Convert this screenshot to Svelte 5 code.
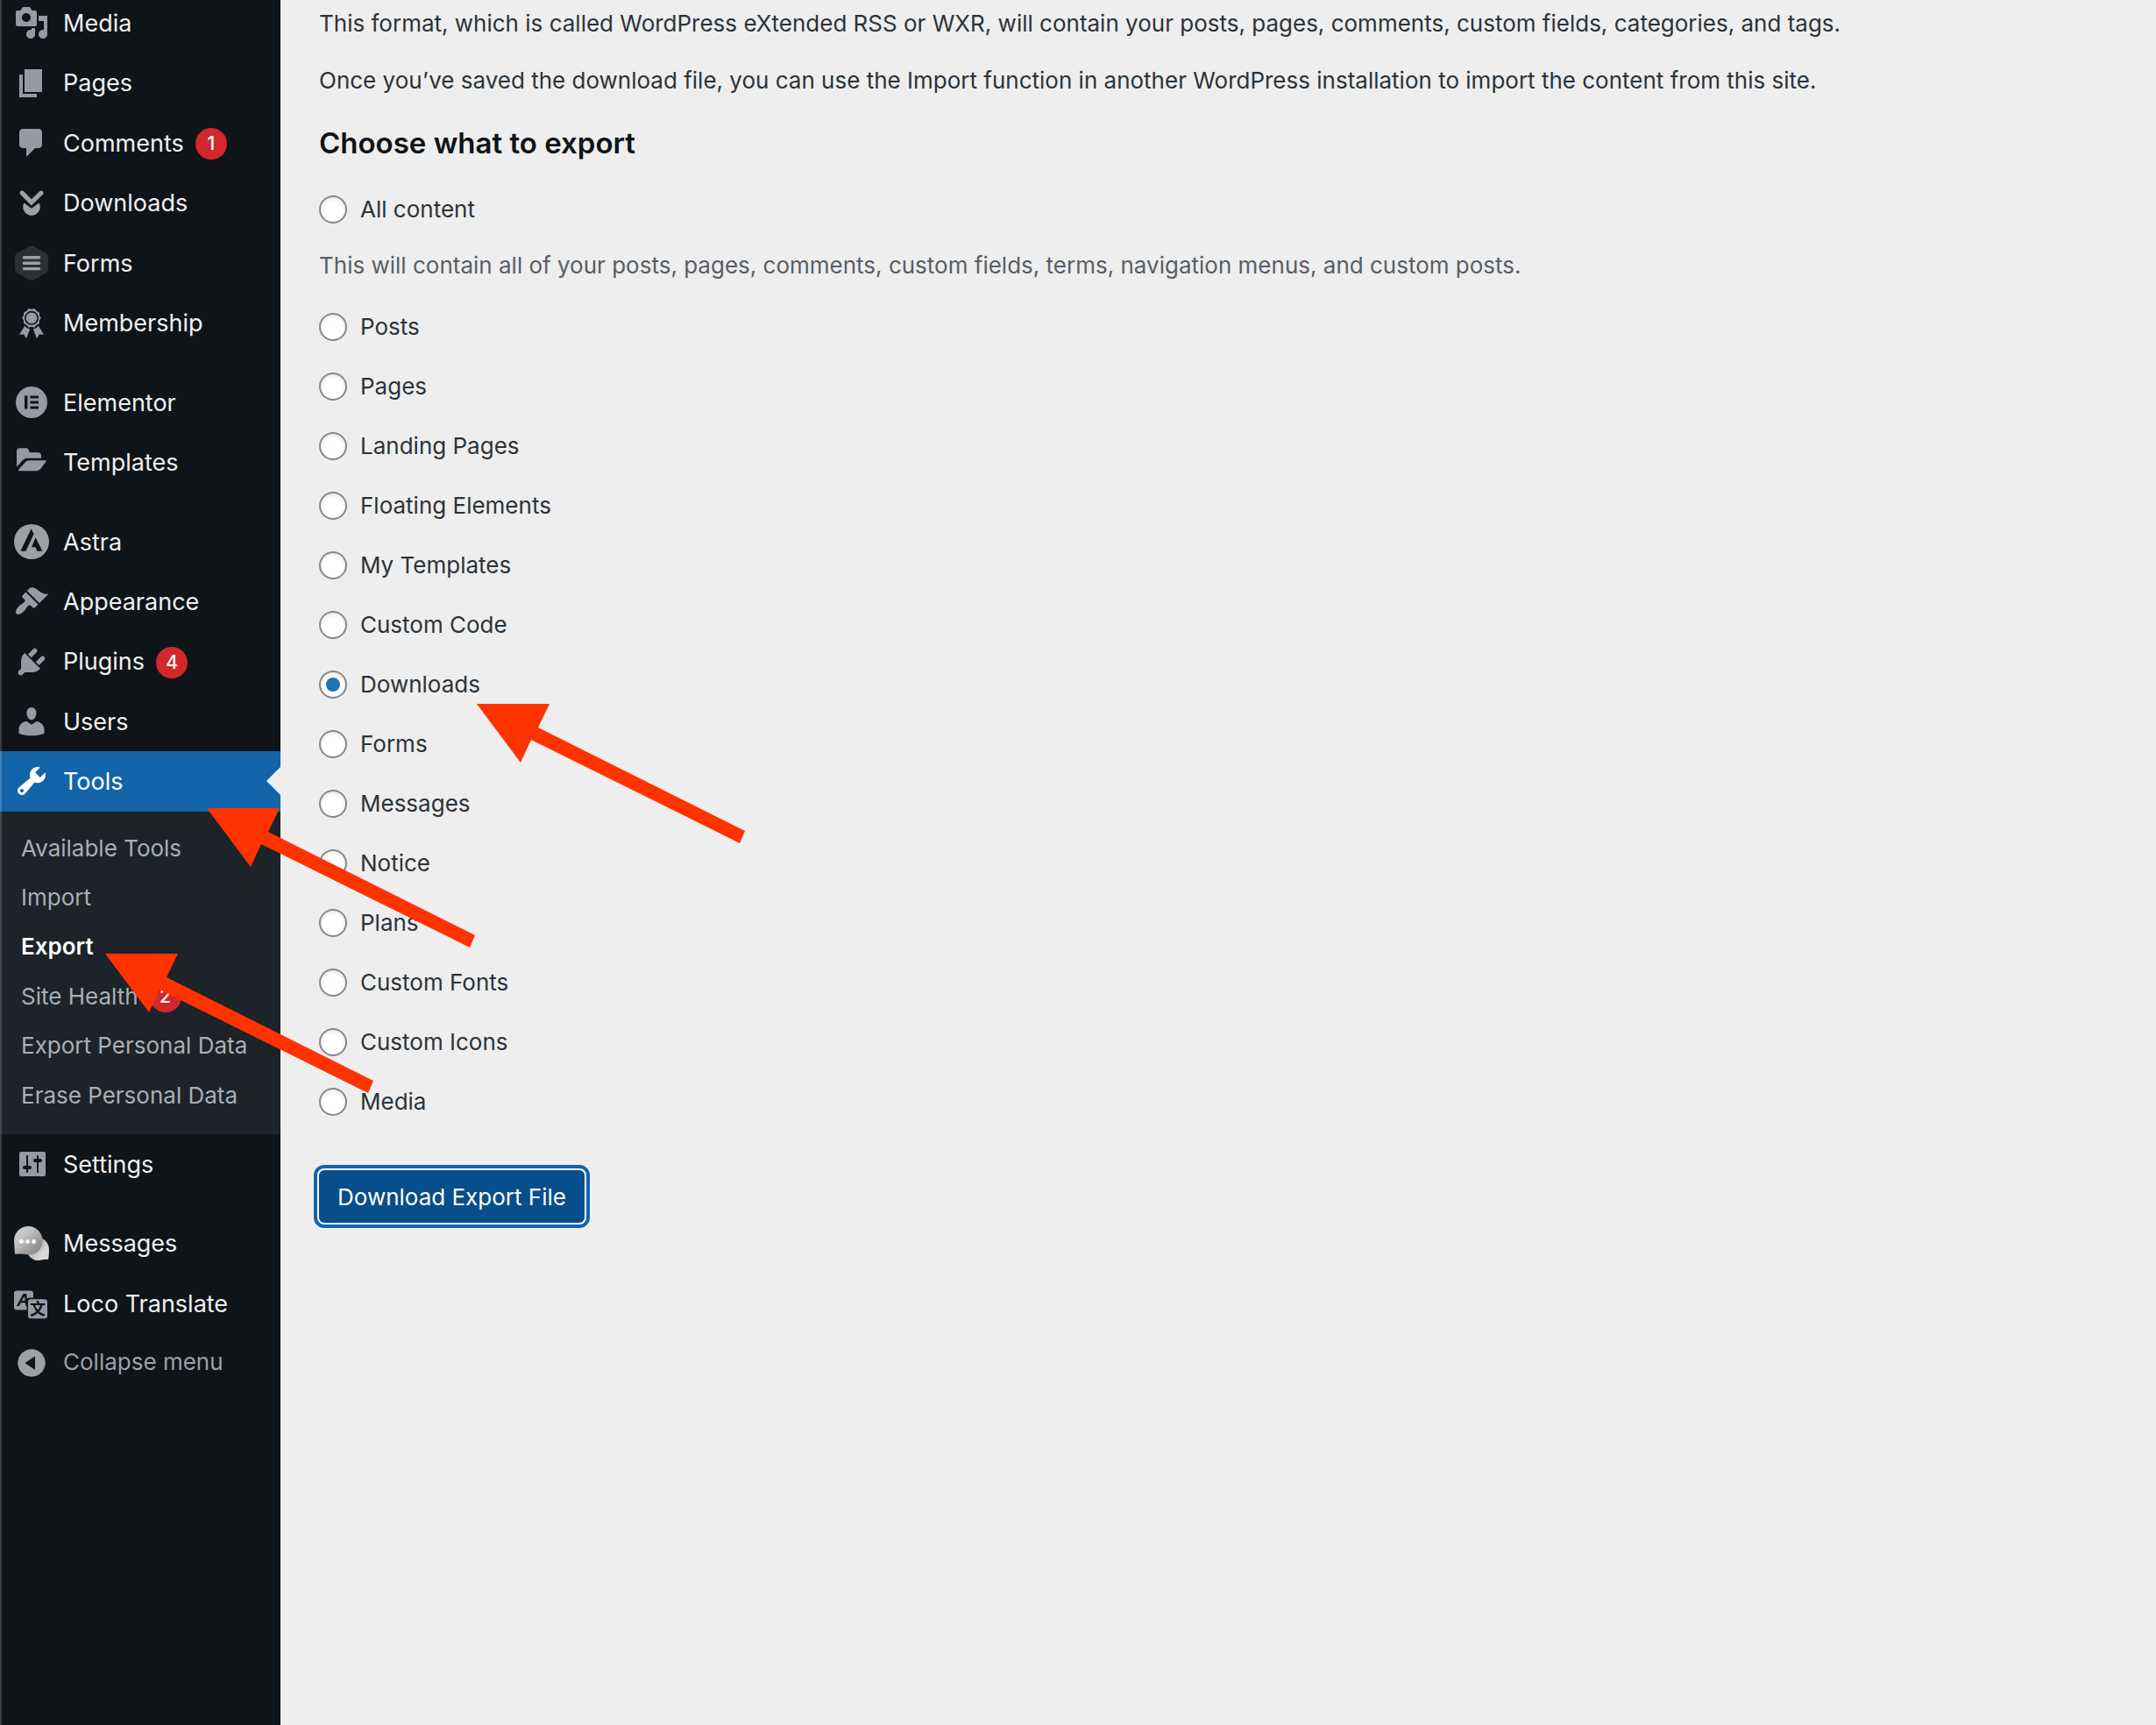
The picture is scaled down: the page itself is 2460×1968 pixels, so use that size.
<script>
  const groups = [
    [
      { label: 'Media', icon: 'media' },
      { label: 'Pages', icon: 'pages' },
      { label: 'Comments', icon: 'comments', count: 1 },
      { label: 'Downloads', icon: 'downloads' },
      { label: 'Forms', icon: 'forms' },
      { label: 'Membership', icon: 'membership' },
    ],
    [
      { label: 'Elementor', icon: 'elementor' },
      { label: 'Templates', icon: 'templates' },
    ],
    [
      { label: 'Astra', icon: 'astra' },
      { label: 'Appearance', icon: 'appearance' },
      { label: 'Plugins', icon: 'plugins', count: 4 },
      { label: 'Users', icon: 'users' },
      {
        label: 'Tools',
        icon: 'tools',
        current: true,
        children: [
          { label: 'Available Tools' },
          { label: 'Import' },
          { label: 'Export', current: true },
          { label: 'Site Health', count: 2 },
          { label: 'Export Personal Data' },
          { label: 'Erase Personal Data' },
        ],
      },
      { label: 'Settings', icon: 'settings' },
    ],
    [
      { label: 'Messages', icon: 'messages' },
      { label: 'Loco Translate', icon: 'loco' },
    ],
  ];

  const paths = {
    media:
      'M13 11V4c0-.55-.45-1-1-1h-1.67L9 1H5L3.67 3H2c-.55 0-1 .45-1 1v7c0 .55.45 1 1 1h10c.55 0 1-.45 1-1zM7 4.5c1.38 0 2.5 1.12 2.5 2.5S8.38 9.5 7 9.5 4.5 8.38 4.5 7 5.62 4.5 7 4.5zM14 6h5v10.5c0 1.38-1.12 2.5-2.5 2.5S14 17.88 14 16.5s1.12-2.5 2.5-2.5c.17 0 .34.02.5.05V9h-3V6zm-4 8.05V13h2v3.5c0 1.38-1.12 2.5-2.5 2.5S7 17.88 7 16.5 8.12 14 9.5 14c.17 0 .34.02.5.05z',
    pages: 'M6 15V2h10v13H6zm-1 1h8v2H3V5h2v11z',
    comments:
      'M5 2h9c1.1 0 2 .9 2 2v7c0 1.1-.9 2-2 2h-2l-5 5v-5H5c-1.1 0-2-.9-2-2V4c0-1.1.9-2 2-2z',
    templates:
      'M1.5 12.9V4Q1.5 2.1 3.4 2.1H6.8Q8 2.1 8.4 3.2L8.9 4.6H13.6Q15.5 4.6 15.5 6.4V7.9H7.4Q6 7.9 5 9ZM2.6 14.4L6.6 10Q7.4 9.1 8.6 9.1H17.9Q18.6 9.2 18.2 9.9L15.2 13.9Q14.2 15.1 12.8 15.1H3Q2.2 15 2.6 14.4Z',
    appearance:
      'M14.48 11.06L7.41 3.99l1.5-1.5c.5-.56 2.3-.47 3.51.32 1.21.8 1.43 1.28 2.91 2.1 1.18.64 2.45 1.26 4.45.85zm-.71.71L6.7 4.7 4.93 6.47c-.39.39-.39 1.02 0 1.41l1.06 1.06c.39.39.39 1.03 0 1.42-.6.6-1.43 1.11-2.21 1.69-.35.26-.7.53-1.01.84C1.43 14.23.4 16.08 1.4 17.07c.99 1 2.84-.03 4.18-1.36.31-.31.58-.66.85-1.02.57-.78 1.08-1.61 1.69-2.21.39-.39 1.02-.39 1.41 0l1.06 1.06c.39.39 1.02.39 1.41 0z',
    plugins:
      'M13.11 4.36L9.87 7.6 8 5.73l3.24-3.24c.35-.34 1.05-.2 1.56.32.52.51.66 1.21.31 1.55zm-8 1.77l.91-1.12 9.01 9.01-1.19.84c-.71.71-2.63 1.16-3.82 1.16H6.14L4.9 17.26c-.59.59-1.54.59-2.12 0-.59-.58-.59-1.53 0-2.12l1.24-1.24v-3.88c0-1.13.4-3.19 1.09-3.89zm7.26 3.97l3.24-3.24c.34-.35 1.04-.21 1.55.31.52.51.66 1.21.31 1.55l-3.24 3.25z',
    users:
      'M10 9.25c-2.27 0-2.73-3.44-2.73-3.44C7 4.02 7.82 2 9.97 2c2.16 0 2.98 2.02 2.71 3.81 0 0-.41 3.44-2.68 3.44zm0 2.57L12.72 10c2.39 0 4.52 2.33 4.52 4.53v2.49s-3.65 1.13-7.24 1.13c-3.65 0-7.24-1.13-7.24-1.13v-2.49c0-2.25 1.94-4.48 4.47-4.48z',
    tools:
      'M16.68 9.77c-1.34 1.34-3.3 1.67-4.95.99l-5.41 6.52c-.99.99-2.59.99-3.58 0s-.99-2.59 0-3.57l6.52-5.42c-.68-1.65-.35-3.61.99-4.95 1.28-1.28 3.12-1.62 4.72-1.06l-2.89 2.89 2.82 2.82 2.86-2.87c.53 1.58.18 3.39-1.08 4.65zM3.81 16.21c.4.39 1.04.39 1.43 0 .4-.4.4-1.04 0-1.43-.39-.4-1.03-.4-1.43 0-.39.39-.39 1.03 0 1.43z',
    settings:
      'M18 16V4c0-.55-.45-1-1-1H4c-.55 0-1 .45-1 1v12c0 .55.45 1 1 1h13c.55 0 1-.45 1-1zM8 11h1c.55 0 1 .45 1 1s-.45 1-1 1H8v1.5c0 .28-.22.5-.5.5s-.5-.22-.5-.5V13H6c-.55 0-1-.45-1-1s.45-1 1-1h1V5.5c0-.28.22-.5.5-.5s.5.22.5.5V11zm5-2h-1c-.55 0-1-.45-1-1s.45-1 1-1h1V5.5c0-.28.22-.5.5-.5s.5.22.5.5V7h1c.55 0 1 .45 1 1s-.45 1-1 1h-1v5.5c0 .28-.22.5-.5.5s-.5-.22-.5-.5V9z',
    collapse:
      'M10 2.16c4.33 0 7.84 3.51 7.84 7.84s-3.51 7.84-7.84 7.84S2.16 14.33 2.16 10 5.71 2.16 10 2.16zm2 11.72V6.12L6.18 9.97z',
  };

  const types = [
    'Posts',
    'Pages',
    'Landing Pages',
    'Floating Elements',
    'My Templates',
    'Custom Code',
    'Downloads',
    'Forms',
    'Messages',
    'Notice',
    'Plans',
    'Custom Fonts',
    'Custom Icons',
    'Media',
  ];

  let selected = $state('Downloads');

  // Tip of each annotation arrow.
  const arrows = [
    [544, 803],
    [236, 922],
    [120, 1088],
  ];
</script>

{#snippet icon(name)}
  <svg class="icon" viewBox="0 0 20 20" aria-hidden="true">
    {#if name === 'downloads'}
      <path class="chevron" d="M4.6 4.1L9.9 9.4 15.5 4.1" />
      <path class="soft" d="M5.7 9.7L10 12.9 14.3 9.7A4.9 4.9 0 1 1 5.7 9.7Z" />
    {:else if name === 'forms'}
      <path
        class="hexagon"
        d="M8.8.5Q10-.1 11.2.5L18.2 4.4Q19.5 5.1 19.5 6.5V13.7Q19.5 15.1 18.2 15.8L11.2 19.8Q10 20.4 8.8 19.8L1.8 15.8Q.5 15.1.5 13.7V6.5Q.5 5.1 1.8 4.4Z"
      />
      <path class="lines" d="M5.7 6.9H14.3M5.7 10.1H14.3M5.7 13.3H14.3" />
    {:else if name === 'membership'}
      <path d="M6.1 11.9L3 16.9 5.6 16.7 7 19.1 9.1 13.7 7.4 13.1ZM13.9 11.9L17 16.9 14.4 16.7 13 19.1 10.9 13.7 12.6 13.1Z" />
      <path
        d="M8.3 2L10 2.4 11.7 2 12.8 3.4 14.4 4.2 14.5 6 15.4 7.4 14.5 8.8 14.4 10.6 12.8 11.4 11.7 12.9 10 12.4 8.3 12.9 7.2 11.4 5.6 10.6 5.5 8.8 4.6 7.4 5.5 6 5.6 4.2 7.2 3.4Z"
      />
      <circle class="ring" cx="10" cy="7.4" r="3.6" />
    {:else if name === 'elementor'}
      <circle cx="10" cy="10" r="9" />
      <path class="cut" d="M6 6.3H7.7V13.7H6ZM9.2 6.3H14V7.8H9.2ZM9.2 9.3H14V10.7H9.2ZM9.2 12.2H14V13.7H9.2Z" />
    {:else if name === 'astra'}
      <circle class="soft" cx="10" cy="10" r="10" />
      <path class="cut" d="M9.8 2.6L11.3 5.6 6.7 15.4H3.7ZM12.3 7.6L16.2 15.4H13.2L12.2 13.1H10Z" />
    {:else if name === 'messages'}
      <defs>
        <linearGradient id="bubble-front" x1="0" y1="0" x2="1" y2="1">
          <stop offset="0.3" stop-color="#c8c8c8" />
          <stop offset="0.9" stop-color="#858585" />
        </linearGradient>
        <linearGradient id="bubble-back" x1="0" y1="0" x2="1" y2="1">
          <stop offset="0.3" stop-color="#a8a8a8" />
          <stop offset="0.7" stop-color="#dadada" />
        </linearGradient>
      </defs>
      <path fill="url(#bubble-back)" d="M15.6 6.6Q20 8.8 20 13.5Q20 16 19.6 18.9Q17 18.8 14.2 19.5Q10.5 19.8 8 16.2Z" />
      <path fill="url(#bubble-front)" d="M.5 15.9L0 8.1A8.1 8.1 0 0 1 16.2 8.1Q16 15.6 8.6 16.2Q4 15.5.5 15.9Z" />
      <g fill="#fff">
        <circle cx="4.2" cy="8.7" r="1.2" />
        <circle cx="7.7" cy="8.7" r="1.2" />
        <circle cx="11.3" cy="8.7" r="1.2" />
      </g>
    {:else if name === 'loco'}
      <rect x="0" y="2.7" width="11" height="11" rx="1.6" />
      <text class="latin" x="1.6" y="11.6">A</text>
      <rect class="cut" x="7.2" y="6.8" width="12.6" height="12.6" rx="2" />
      <rect x="8" y="7.6" width="11" height="11" rx="1.6" />
      <text class="han" x="9" y="16.5">文</text>
    {:else}
      <path fill-rule="evenodd" d={paths[name]} />
    {/if}
  </svg>
{/snippet}

<div class="page">
  <nav class="sidebar" aria-label="Main menu">
    {#each groups as group}
      <ul class="group">
        {#each group as item}
          <li>
            <a class="item" class:current={item.current} href="#{item.icon}">
              {@render icon(item.icon)}
              <span>{item.label}</span>
              {#if item.count}<span class="badge">{item.count}</span>{/if}
            </a>
            {#if item.children}
              <ul class="submenu">
                {#each item.children as child}
                  <li>
                    <a class="subitem" class:active={child.current} href="#tools">
                      {child.label}
                      {#if child.count}<span class="badge">{child.count}</span>{/if}
                    </a>
                  </li>
                {/each}
              </ul>
            {/if}
          </li>
        {/each}
      </ul>
    {/each}
    <button class="collapse" type="button">
      {@render icon('collapse')}
      <span>Collapse menu</span>
    </button>
  </nav>

  <main class="content">
    <p>This format, which is called WordPress eXtended RSS or WXR, will contain your posts, pages, comments, custom fields, categories, and tags.</p>
    <p>Once you’ve saved the download file, you can use the Import function in another WordPress installation to import the content from this site.</p>
    <h2 id="export-title">Choose what to export</h2>
    <form onsubmit={(e) => e.preventDefault()}>
      <div role="radiogroup" aria-labelledby="export-title">
        <label class="option">
          <input type="radio" name="content" value="All content" bind:group={selected} />
          All content
        </label>
        <p class="description">This will contain all of your posts, pages, comments, custom fields, terms, navigation menus, and custom posts.</p>
        {#each types as type}
          <label class="option">
            <input type="radio" name="content" value={type} bind:group={selected} />
            {type}
          </label>
        {/each}
      </div>
      <button class="submit" type="submit">Download Export File</button>
    </form>
  </main>

  <svg class="arrows" viewBox="0 0 900 1300" aria-hidden="true">
    {#each arrows as [x, y]}
      <path transform="translate({x} {y})" d="M0 0H83L70 27 306 145 300 159 62 41 50 67Z" />
    {/each}
  </svg>
</div>

<style>
  :global(body) {
    background: #eeeeee;
  }

  .page {
    position: relative;
    display: flex;
    min-height: 100vh;
    overflow: hidden;
    font-family: Inter, 'Liberation Sans', sans-serif;
    font-size: 26px;
    color: #2c3338;
    background: #eeeeee;
  }

  ul {
    margin: 0;
    padding: 0;
    list-style: none;
  }

  .sidebar {
    position: relative;
    flex: none;
    width: 320px;
    margin-top: -8px;
    background: #0f1418;
  }

  .sidebar::after {
    content: '';
    position: absolute;
    inset: 0 auto 0 0;
    width: 2px;
    background: rgb(255 255 255 / 18%);
  }

  .group + .group {
    margin-top: 22px;
  }

  .item,
  .collapse {
    position: relative;
    display: flex;
    align-items: center;
    padding: 17px 0 15px 16px;
    font-size: 27px;
    line-height: 1.35;
    color: #f0f0f1;
    text-decoration: none;
  }

  .icon {
    flex: none;
    width: 40px;
    height: 40px;
    margin: -3px 16px -1px 0;
    fill: #969ba1;
  }

  .current {
    color: #fff;
    background: #1464aa;
  }

  .current .icon {
    fill: #fff;
  }

  .current::after {
    content: '';
    position: absolute;
    top: 18px;
    right: 0;
    border: 16px solid transparent;
    border-left-width: 0;
    border-right-color: #eeeeee;
  }

  .badge {
    display: inline-block;
    min-width: 36px;
    height: 36px;
    margin-left: 13px;
    border-radius: 18px;
    font-size: 21px;
    font-weight: 500;
    line-height: 36px;
    text-align: center;
    color: #fff;
    background: #d2282b;
  }

  .submenu {
    padding: 14px 0 16px;
    background: #1d2328;
  }

  .subitem {
    display: flex;
    align-items: center;
    padding: 10px 24px;
    line-height: 1.4;
    color: #a9afb5;
    text-decoration: none;
  }

  .active {
    font-weight: 600;
    color: #fff;
  }

  .collapse {
    width: 100%;
    padding: 15px 0 15px 16px;
    border: 0;
    font-family: inherit;
    font-size: 26px;
    line-height: 1.4;
    color: #9ca1a5;
    background: none;
  }

  .collapse .icon {
    margin: -2px 16px -2px 0;
  }

  .collapse .icon,
  .soft {
    fill: #9ca1a5;
  }

  .chevron {
    fill: none;
    stroke: #9ca1a5;
    stroke-width: 2.6;
    stroke-linecap: round;
  }

  .hexagon {
    fill: #2b3034;
  }

  .lines {
    fill: none;
    stroke: #9ca1a5;
    stroke-width: 1.7;
    stroke-linecap: round;
  }

  .ring {
    fill: none;
    stroke: #0f1418;
    stroke-width: 0.8;
  }

  .cut,
  .latin,
  .han {
    fill: #0f1418;
  }

  .latin {
    font: italic bold 10px 'Liberation Sans', sans-serif;
  }

  .han {
    font: bold 9px 'Noto Sans CJK SC', sans-serif;
  }

  .content {
    flex: 1;
    min-width: 0;
    padding: 7px 40px 0 44px;
    line-height: 39px;
  }

  p {
    margin: 0 0 26px;
  }

  h2 {
    margin: 28px 0 17px;
    font-size: 33px;
    font-weight: 600;
    line-height: 48px;
    color: #0f1418;
  }

  .description {
    margin: 11px 0 16px;
    color: #595e65;
  }

  .option {
    display: flex;
    align-items: center;
    gap: 15px;
    height: 68px;
  }

  .option input {
    appearance: none;
    display: grid;
    place-items: center;
    flex: none;
    width: 32px;
    height: 32px;
    margin: 2px 0 0;
    border: 2px solid #85888d;
    border-radius: 50%;
    background: #fff;
    box-shadow: inset 0 2px 4px rgb(0 0 0 / 10%);
  }

  .option input:checked::before {
    content: '';
    width: 16px;
    height: 16px;
    border-radius: 50%;
    background: #2371b8;
  }

  .submit {
    height: 60px;
    margin: 45px 0 40px;
    padding: 0 21px;
    border: 0;
    border-radius: 6px;
    font: inherit;
    color: #fff;
    background: #084e8a;
    box-shadow:
      0 0 0 2px #fff,
      0 0 0 6px #1464aa;
  }

  .arrows {
    position: absolute;
    top: 0;
    left: 0;
    width: 900px;
    height: 1300px;
    fill: #ff3300;
    pointer-events: none;
  }
</style>
